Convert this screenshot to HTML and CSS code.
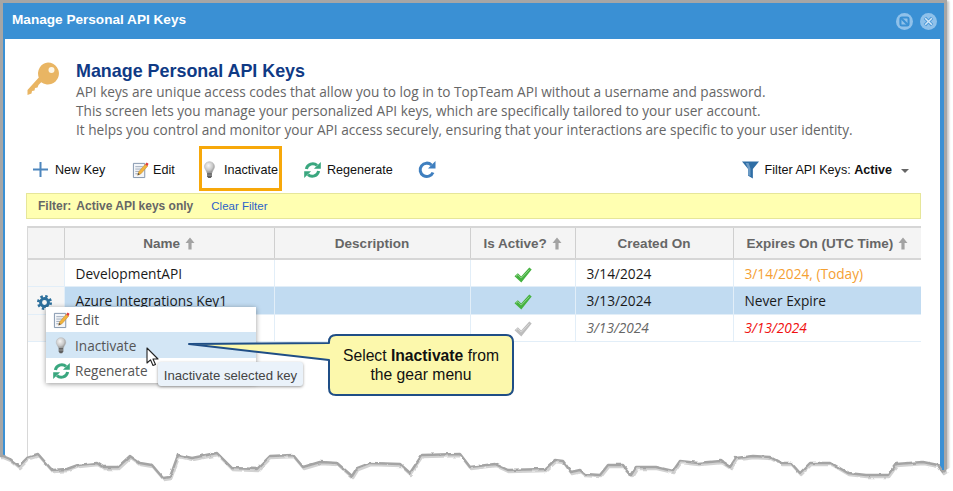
FILE: index.html
```html
<!DOCTYPE html>
<html lang="en">
<head>
<meta charset="utf-8">
<title>Manage Personal API Keys</title>
<link rel="stylesheet" href="styles.css">
</head>
<body>
<svg class="defs" width="0" height="0" aria-hidden="true">
  <defs>
    <radialGradient id="bulbGrad" cx="0.4" cy="0.35" r="0.7"><stop offset="0" stop-color="#f6f6f6"/><stop offset="0.6" stop-color="#c8c8c8"/><stop offset="1" stop-color="#868686"/></radialGradient>
    <filter id="rough" x="-2%" y="-20%" width="104%" height="140%">
      <feTurbulence type="fractalNoise" baseFrequency="0.12" numOctaves="2" seed="4"/>
      <feDisplacementMap in="SourceGraphic" scale="3" xChannelSelector="R" yChannelSelector="G"/>
    </filter>
    <symbol id="i-edit" viewBox="0 0 18 19">
      <path d="M1.500 2.500h12v15h-12z" fill="#f4f6f9" stroke="#7f93ab"/>
      <path d="M3.500 6h8M3.500 8.500h7M3.500 11h5M3.500 13.500h4" stroke="#9aa7b8"/>
      <path d="M6 15l1-3.500 7-8 2.500 2-7 8z" fill="#f2b43c" stroke="#b9802a" stroke-width=".5"/>
      <path d="M14 3.500l1.500-2 2 1.500-1.200 2.500z" fill="#e23b3b"/>
      <path d="M6 15l.6-2.200 1.600 1.300z" fill="#444"/>
    </symbol>
    <symbol id="i-bulb" viewBox="0 0 14 20">
      <path d="M7 .8c3.300 0 5.600 2.500 5.600 5.400 0 2.600-2 3.900-2.700 6.800H4.100C3.400 10.100 1.400 8.800 1.400 6.200 1.400 3.300 3.700.8 7 .8z" fill="url(#bulbGrad)" stroke="#b5b5b5" stroke-width=".6"/>
      <path d="M4.300 13h5.400v4l-1.300 2H5.600l-1.300-2z" fill="#5e5e5e"/>
      <path d="M4.300 14.500h5.400M4.300 16h5.400" stroke="#a8a8a8" stroke-width=".6"/>
    </symbol>
    <symbol id="i-regen" viewBox="0 0 18 18">
      <path d="M2.500 8A6.800 6.800 0 0 1 13.800 4.200" fill="none" stroke="#3aa77f" stroke-width="3.200"/>
      <path d="M10.500 7.800h7.300V.6z" fill="#3aa77f"/>
      <path d="M15.500 10A6.800 6.800 0 0 1 4.200 13.800" fill="none" stroke="#3aa77f" stroke-width="3.200"/>
      <path d="M7.500 10.200H.2v7.200z" fill="#3aa77f"/>
    </symbol>
    <symbol id="i-check" viewBox="0 0 18 16">
      <path d="M.5 9.200l3.300-3 3.400 3.300L15.300.6l2.400 2L7.300 15.400z" fill="currentColor"/>
      <path d="M2 9.200l1.800-1.500 3.400 3.400 8.200-8.400" fill="none" stroke="#fff" stroke-opacity=".4"/>
    </symbol>
    <symbol id="i-up" viewBox="0 0 10 13">
      <path d="M5 .5l4.500 5.500H6.600v6.500H3.400V6H.5z" fill="#a3a3a3"/>
    </symbol>
  </defs>
</svg>

<div class="page">
  <div class="frame">
    <div class="window">
      <header class="titlebar">
        <h2 class="title">Manage Personal API Keys</h2>
        <div class="winbtns">
          <svg class="winbtn" viewBox="0 0 18 18"><circle cx="9" cy="9" r="9" fill="#8fc1ea"/><rect x="4.700" y="4.700" width="8.600" height="8.600" rx="1.500" fill="none" stroke="#3a90d4" stroke-width="2.200"/><path d="M5 5l8 8" stroke="#3a90d4" stroke-width="2.200"/></svg>
          <svg class="winbtn" viewBox="0 0 18 18"><circle cx="9" cy="9" r="9" fill="#8fc1ea"/><path d="M5.200 5.200l7.600 7.600M12.800 5.200l-7.600 7.600" stroke="#4a98d8" stroke-width="3.600"/><path d="M5.500 5.500l7 7M12.500 5.500l-7 7" stroke="#d6e8f7" stroke-width="1.500"/></svg>
        </div>
      </header>

      <main class="content">
        <section class="intro">
          <svg class="key" viewBox="0 0 33 33"><path d="M21 .5a11 11 0 1 1-6.800 19.700L11.500 23l-1 2.500-2.500.5-.5 2.500-2.500.5-.5 2.500-4 1.500V28L11.800 15.500A11 11 0 0 1 21 .5z" fill="#e9b563"/><circle cx="24.500" cy="8" r="3" fill="#fdf6e6"/></svg>
          <div class="intro-text">
            <h1 class="heading">Manage Personal API Keys</h1>
            <p class="desc">API keys are unique access codes that allow you to log in to TopTeam API without a username and password.</p>
            <p class="desc">This screen lets you manage your personalized API keys, which are specifically tailored to your user account.</p>
            <p class="desc">It helps you control and monitor your API access securely, ensuring that your interactions are specific to your user identity.</p>
          </div>
        </section>

        <nav class="toolbar">
          <div class="tools">
            <span class="tool tool-new"><svg class="ic-plus" viewBox="0 0 15 15"><path d="M7.500 0v15M0 7.500h15" stroke="#4d86bd" stroke-width="2"/></svg>New Key</span>
            <span class="tool tool-edit"><svg class="ic-16"><use href="#i-edit"/></svg>Edit</span>
            <span class="tool tool-inactivate"><svg class="ic-bulb"><use href="#i-bulb"/></svg>Inactivate</span>
            <span class="tool tool-regen"><svg class="ic-16"><use href="#i-regen"/></svg>Regenerate</span>
            <svg class="ic-refresh" viewBox="0 0 18 18"><path d="M15 11.500A6.700 6.700 0 1 1 13.500 4" fill="none" stroke="#3f7fbf" stroke-width="3"/><path d="M10 7.500h7.500V0z" fill="#3f7fbf"/></svg>
          </div>
          <div class="filter-select">
            <svg class="ic-funnel" viewBox="0 0 18 18"><path d="M0 0h18l-6.500 8v10l-5-3V8z" fill="#2f6ea5"/><path d="M4 1.500h3l2 6v8l-2.500-1.500V8z" fill="#6d9cc6"/></svg>
            <span>Filter API Keys: <b class="strong">Active</b></span>
            <span class="caret"></span>
          </div>
        </nav>

        <div class="filterbar"><b class="fb-label">Filter:</b><b class="fb-value">Active API keys only</b><a class="fb-clear">Clear Filter</a></div>

        <div class="grid-wrap">
          <table class="grid">
            <colgroup><col class="c0"><col class="c1"><col class="c2"><col class="c3"><col class="c4"><col class="c5"></colgroup>
            <thead>
              <tr>
                <th></th>
                <th>Name <svg class="up"><use href="#i-up"/></svg></th>
                <th>Description</th>
                <th>Is Active? <svg class="up"><use href="#i-up"/></svg></th>
                <th>Created On</th>
                <th>Expires On (UTC Time) <svg class="up"><use href="#i-up"/></svg></th>
              </tr>
            </thead>
            <tbody>
              <tr>
                <td class="side"></td><td>DevelopmentAPI</td><td></td>
                <td class="mid"><svg class="check good"><use href="#i-check"/></svg></td>
                <td>3/14/2024</td><td class="today">3/14/2024, (Today)</td>
              </tr>
              <tr class="selected">
                <td class="side"><svg class="gear" viewBox="0 0 16 16"><circle cx="8" cy="8" r="4.200" fill="none" stroke="#2c6f9c" stroke-width="3.200"/><circle cx="8" cy="8" r="6.600" fill="none" stroke="#2c6f9c" stroke-width="2.800" stroke-dasharray="2.600 2.580"/></svg></td>
                <td>Azure Integrations Key1</td><td></td>
                <td class="mid"><svg class="check good"><use href="#i-check"/></svg></td>
                <td>3/13/2024</td><td>Never Expire</td>
              </tr>
              <tr class="inactive">
                <td class="side"></td><td></td><td></td>
                <td class="mid"><svg class="check off"><use href="#i-check"/></svg></td>
                <td>3/13/2024</td><td class="expired">3/13/2024</td>
              </tr>
            </tbody>
          </table>
        </div>
      </main>
    </div>
  </div>

  <ul class="menu">
    <li class="menu-item"><svg class="ic-16"><use href="#i-edit"/></svg>Edit</li>
    <li class="menu-item hot"><svg class="ic-bulb-sm"><use href="#i-bulb"/></svg>Inactivate</li>
    <li class="menu-item"><svg class="ic-16"><use href="#i-regen"/></svg>Regenerate</li>
  </ul>

  <div class="tooltip">Inactivate selected key</div>

  <svg class="callout-shape" viewBox="0 0 953 491"><path d="M189 344L329 343V342Q329 335 336 335H506Q513 335 513 342V388Q513 395 506 395H336Q329 395 329 388V360Z" fill="#fcf8ac" stroke="#1f4e86" stroke-width="2" stroke-linejoin="round"/></svg>
  <div class="callout-text">Select <b>Inactivate</b> from<br>the gear menu</div>

  <svg class="cursor" viewBox="0 0 13 20"><path d="M1 1v15l3.500-3.200 2.500 5.700 2.500-1-2.500-5.500H12z" fill="#fff" stroke="#222" stroke-width="1.100" stroke-linejoin="round"/></svg>

  <svg class="tear" viewBox="0 0 953 491">
    <polygon fill="#fff" points="0,456 3,456 10,459 19,466 28,457 38,454 52,470 67,469 78,465 97,463 103,467 118,467 130,456 140,463 152,465 163,478 170,477 178,455 192,458 217,453 232,468 257,469 270,456 293,455 303,467 320,462 337,463 352,476 357,468 370,463 400,464 410,473 422,455 460,454 470,467 495,464 508,470 545,469 555,460 563,461 571,472 580,470 585,474 600,475 608,465 623,465 631,475 636,467 656,467 673,471 680,461 698,463 721,461 730,467 736,458 753,456 770,457 781,463 791,463 800,473 810,463 831,463 848,473 866,475 888,475 896,464 923,462 938,465 943,472 946,470 953,466 953,491 0,491"/>
    <g class="tear-rough">
      <polyline class="tear-shadow" points="0,456 3,456 10,459 19,466 28,457 38,454 52,470 67,469 78,465 97,463 103,467 118,467 130,456 140,463 152,465 163,478 170,477 178,455 192,458 217,453 232,468 257,469 270,456 293,455 303,467 320,462 337,463 352,476 357,468 370,463 400,464 410,473 422,455 460,454 470,467 495,464 508,470 545,469 555,460 563,461 571,472 580,470 585,474 600,475 608,465 623,465 631,475 636,467 656,467 673,471 680,461 698,463 721,461 730,467 736,458 753,456 770,457 781,463 791,463 800,473 810,463 831,463 848,473 866,475 888,475 896,464 923,462 938,465 943,472 946,470"/>
      <polyline class="tear-line" points="0,456 3,456 10,459 19,466 28,457 38,454 52,470 67,469 78,465 97,463 103,467 118,467 130,456 140,463 152,465 163,478 170,477 178,455 192,458 217,453 232,468 257,469 270,456 293,455 303,467 320,462 337,463 352,476 357,468 370,463 400,464 410,473 422,455 460,454 470,467 495,464 508,470 545,469 555,460 563,461 571,472 580,470 585,474 600,475 608,465 623,465 631,475 636,467 656,467 673,471 680,461 698,463 721,461 730,467 736,458 753,456 770,457 781,463 791,463 800,473 810,463 831,463 848,473 866,475 888,475 896,464 923,462 938,465 943,472 946,470"/>
    </g>
  </svg>
</div>
</body>
</html>
```

FILE: styles.css
```css
* { box-sizing: border-box; }
html, body { margin: 0; padding: 0; background: #fff; }
.defs { position: absolute; }

.page { position: relative; width: 953px; height: 491px; overflow: hidden; background: #fff; }

.frame {
  width: 947px; height: 480px;
  border: 3px solid #a6a6a6; border-bottom: 0;
  box-shadow: 2px 1px 2px #c8c8c8;
}
.window { height: 100%; background: #3a90d4; padding: 0 4px 0 2px; display: flex; flex-direction: column; }

.titlebar { height: 36px; display: flex; align-items: center; justify-content: space-between; padding: 0 0 4px 7px; flex: none; }
.title { margin: 0; font: bold 13.600px "Liberation Sans", Arial, sans-serif; color: #fff; }
.winbtns { display: flex; gap: 7px; margin: 4px 3px 0 0; }
.winbtn { width: 17px; height: 17px; display: block; }

.content { flex: 1; background: #fff; padding: 21px 19px 0 21px; min-height: 0; display: flex; flex-direction: column; }

.intro { display: flex; align-items: flex-start; height: 86px; flex: none; }
.key { width: 33px; height: 33px; margin: 2px 16px 0 1px; flex: none; }
.heading { margin: 0; font: bold 17.900px/22px "Liberation Sans", Arial, sans-serif; color: #0f3a85; }
.desc { margin: 0; font: 13.650px/19px "Open Sans", sans-serif; color: #666; white-space: nowrap; }

.toolbar { height: 45px; display: flex; align-items: center; justify-content: space-between; padding-right: 12px; flex: none; font: 12.600px "Liberation Sans", Arial, sans-serif; color: #111; }
.tools { display: flex; align-items: center; height: 45px; padding-left: 7px; }
.tool { display: flex; align-items: center; padding-top: 2px; }
.ic-plus { width: 15px; height: 15px; margin-right: 7px; }
.ic-16 { width: 17px; height: 18px; margin-right: 5px; flex: none; }
.tool-edit .ic-16 { margin-right: 4px; }
.tool-regen .ic-16 { margin-right: 6px; }
.ic-bulb { width: 13px; height: 18px; margin-right: 8px; }
.tool-new { width: 99px; }
.tool-edit { width: 67px; }
.tool-inactivate { width: 83px; height: 45px; border: 3px solid #f7a80a; padding-left: 1px; margin-right: 22px; white-space: nowrap; }
.tool-regen { width: 115px; white-space: nowrap; }
.ic-refresh { width: 18px; height: 18px; margin: 2px 0 0 -1px; }

.filter-select { display: flex; align-items: center; padding-top: 2px; }
.ic-funnel { width: 17px; height: 18px; margin-right: 6px; }
.strong { color: #111; }
.caret { width: 0; height: 0; border: 4px solid transparent; border-top: 4px solid #666; border-bottom: 0; margin-left: 9px; margin-top: 2px; }

.filterbar { height: 26px; margin: 2px 0 0 0; background: #ffffb1; border: 1px solid #e6e69a; display: flex; align-items: center; padding-left: 11px; font: 12px "Liberation Sans", Arial, sans-serif; color: #666; flex: none; }
.fb-label { margin-right: 5px; }
.fb-value { margin-right: 18px; }
.fb-clear { color: #2b62c9; font-size: 11.500px; }

.grid-wrap { margin: 7px 0 0 1px; flex: 1; border-left: 1px solid #d8d8d8; min-height: 0; }
.grid { width: 893px; table-layout: fixed; border-collapse: collapse; border-top: 2px solid #d6d6d6; }
.c0 { width: 36px; } .c1 { width: 210px; } .c2 { width: 196px; } .c3 { width: 105px; } .c4 { width: 158px; } .c5 { width: 188px; }
.grid th { height: 32px; padding: 0; background: #f4f4f4; border-right: 1px solid #cfcfcf; border-bottom: 2px solid #d6d6d6; font: bold 13.500px "Liberation Sans", Arial, sans-serif; color: #666; text-align: center; vertical-align: middle; }
.grid th:last-child { border-right: 0; }
.up { width: 10px; height: 13px; vertical-align: -2px; margin-left: 1px; }
.grid td { height: 27.500px; padding: 0 0 0 11px; border-right: 1px solid #e2eef8; border-bottom: 1px solid #e2eef8; font: 13.700px "Open Sans", sans-serif; color: #1a1a1a; white-space: nowrap; }
.grid td:last-child { border-right: 0; }
.grid td.side { background: #f6f6f6; padding: 0 2px 0 0; text-align: center; }
.grid td.mid { padding: 0; text-align: center; }
.selected td { background: #c1dbf1; }
.grid .today { color: #f5a033; }
.inactive td { font-style: italic; color: #666; }
.grid .inactive .expired { color: #f01010; }
.check { width: 18px; height: 16px; display: inline-block; vertical-align: middle; }
.good { color: #45b23f; }
.off { color: #bdbdbd; }
.gear { width: 15px; height: 15px; display: inline-block; vertical-align: middle; }

.menu { position: absolute; left: 46px; top: 307px; width: 210px; margin: 0; padding: 0; list-style: none; background: #fff; box-shadow: 0 1px 5px rgba(0,0,0,.4); font: 13.600px "Open Sans", sans-serif; color: #555; }
.menu-item { height: 25px; display: flex; align-items: center; padding-left: 7px; }
.menu-item.hot { height: 26px; background: #d3e6f5; }
.ic-bulb-sm { width: 12px; height: 17px; margin: 0 8px 0 2px; }

.tooltip { position: absolute; left: 158px; top: 362px; width: 145px; height: 24px; border-radius: 3px; background: #eaf2fa; box-shadow: 0 1px 3px rgba(0,0,0,.4); font: 13.200px/27px "Liberation Sans", Arial, sans-serif; color: #444; text-align: center; white-space: nowrap; }

.callout-shape { position: absolute; left: 0; top: 0; width: 953px; height: 491px; pointer-events: none; }
.callout-text { position: absolute; left: 329px; top: 346px; width: 184px; text-align: center; font: 15.700px/19px "Liberation Sans", Arial, sans-serif; color: #111; }
.cursor { position: absolute; left: 146px; top: 347px; width: 13px; height: 20px; }

.tear { position: absolute; left: 0; top: 0; width: 953px; height: 491px; pointer-events: none; }
.tear-rough { filter: url(#rough); }
.tear-line { fill: none; stroke: #a4a4a4; stroke-width: 2.400; stroke-linejoin: round; }
.tear-shadow { fill: none; stroke: #d2d2d2; stroke-width: 2.500; stroke-linejoin: round; transform: translate(1px, 2px); }
```
